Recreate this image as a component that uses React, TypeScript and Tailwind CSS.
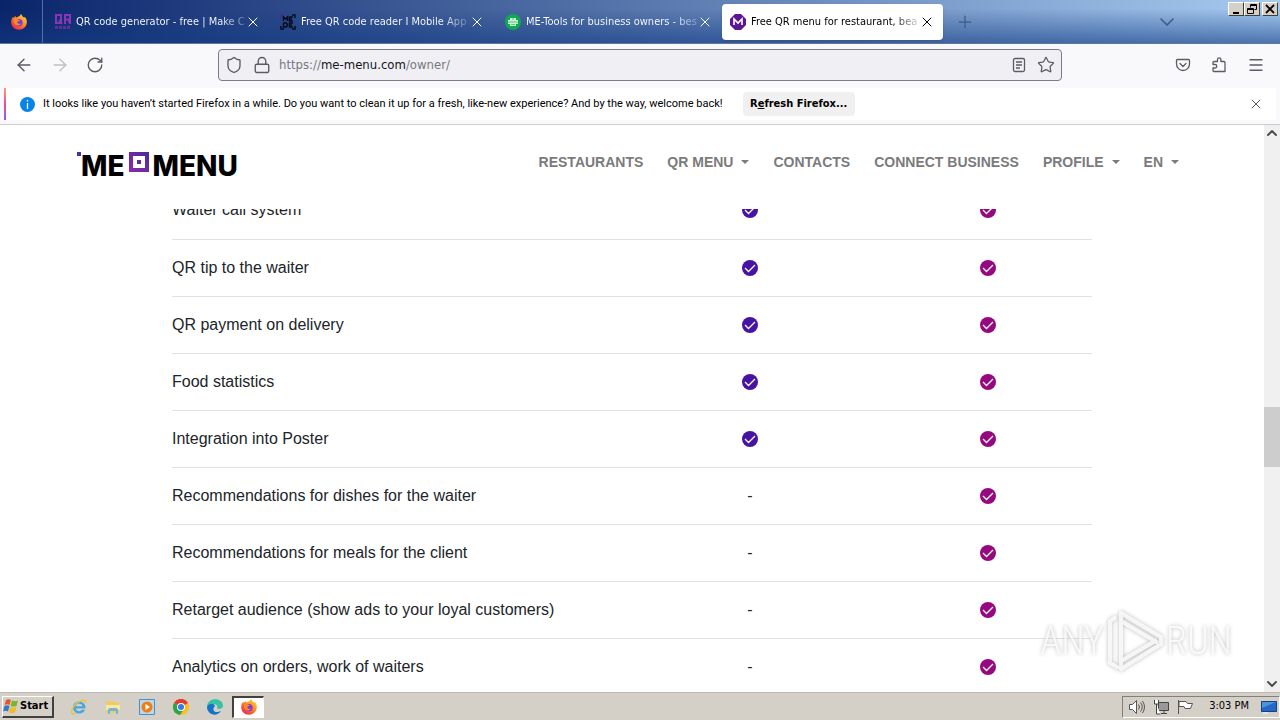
import { ReactNode, FC } from 'react'
import {
  ArrowLeft,
  ArrowRight,
  ChevronDown,
  ChevronUp,
  Lock,
  Menu,
  Plus,
  RotateCw,
  Shield,
  Star,
  X,
} from 'lucide-react'

interface TabProps {
  title: string
  icon: ReactNode
  active?: boolean
}

interface Feature {
  name: string
  basic: boolean
}

const features: Feature[] = [
  { name: 'Waiter call system', basic: true },
  { name: 'QR tip to the waiter', basic: true },
  { name: 'QR payment on delivery', basic: true },
  { name: 'Food statistics', basic: true },
  { name: 'Integration into Poster', basic: true },
  { name: 'Recommendations for dishes for the waiter', basic: false },
  { name: 'Recommendations for meals for the client', basic: false },
  { name: 'Retarget audience (show ads to your loyal customers)', basic: false },
  { name: 'Analytics on orders, work of waiters', basic: false },
]

const navLinks = [
  { label: 'RESTAURANTS', menu: false },
  { label: 'QR MENU', menu: true },
  { label: 'CONTACTS', menu: false },
  { label: 'CONNECT BUSINESS', menu: false },
  { label: 'PROFILE', menu: true },
  { label: 'EN', menu: true },
]

const FirefoxIcon: FC = () => (
  <svg className="size-4" viewBox="0 0 16 16" aria-hidden="true">
    <defs>
      <linearGradient id="fox" x1="1" y1="0" x2="0.2" y2="1">
        <stop offset="0" stopColor="#ffe14a" />
        <stop offset="0.45" stopColor="#ff9420" />
        <stop offset="1" stopColor="#ee1f55" />
      </linearGradient>
    </defs>
    <path
      d="M10 0c1 1 1 2 2.300 3.200 1 .3 1.700 0 2 .3C15.500 5 16 6.700 15.800 8.700 15.400 12.700 12.200 15.700 8 15.700c-4.500 0-7.800-3.500-7.800-7.500C.2 6 .9 4.200 2 2.700l.9 1.200L4.200 2l1 1.500C7 2.500 9 2.500 10 0z"
      fill="url(#fox)"
    />
    <circle cx="8" cy="8.700" r="3.600" fill="#7a3be0" />
    <path d="M3 5c2-.5 3 .2 4.500.7L9 6c-.5 1.300-2.300 1-2.700 2.100-.3 1.400 1.700 2.400 3.700 1.400-1 3-6.500 2.700-7-1.500z" fill="#ff8a1c" />
  </svg>
)

const QrGeneratorIcon: FC = () => (
  <svg className="size-4 shrink-0" viewBox="0 0 16 16" fill="none" stroke="#8a35b5" strokeWidth="2" aria-hidden="true">
    <path d="M1 1h5v8H1zM4 6l3 4M10 10V1h5v4.500h-5M12 5.500h2v2h1V10" />
    <path d="M0 13.500h16" strokeDasharray="3 1" strokeWidth="3" stroke="#5f2f9c" />
  </svg>
)

const QrReaderIcon: FC = () => (
  <svg className="size-4 shrink-0" viewBox="0 0 16 16" fill="none" stroke="#080b1c" strokeWidth="1.500" aria-hidden="true">
    <path d="M1 4V1h3" stroke="#4b2a9b" />
    <path d="M12 1h3v3M15 12v3h-3M4 15H1v-3" />
    <path d="M3.500 7V3l2 2 2-2v4M13 3H9.500v4H13M9.500 5H12M3.500 9v4h3l1-2-1-2zM13 9H9.500v4H13M9.500 11H12" />
  </svg>
)

const ToolsIcon: FC = () => (
  <svg className="size-4 shrink-0" viewBox="0 0 16 16" aria-hidden="true">
    <circle cx="8" cy="8" r="8" fill="#12a853" />
    <path d="M5 4h6v2h2v4h-2v2H5v-2H3V6h2z" fill="#c9f2d5" />
    <path d="M8 4v2M3 8h10M6 10.500h4" stroke="#57c883" />
  </svg>
)

const MenuSiteIcon: FC = () => (
  <svg className="size-4 shrink-0" viewBox="0 0 16 16" aria-hidden="true">
    <path d="M5 0h6l5 5v6l-5 5H5l-5-5V5z" fill="#5c1593" />
    <path d="M4 11V5l4 4 4-4v6" fill="none" stroke="#fff" strokeWidth="1.600" />
  </svg>
)

const Tab: FC<TabProps> = ({ title, icon, active }) => (
  <div
    className={
      active
        ? 'flex h-9 w-[221px] items-center rounded bg-white px-2 text-black shadow-sm'
        : 'flex h-9 w-[221px] items-center px-2 text-white'
    }
  >
    {icon}
    <button
      className={
        active
          ? 'ml-[5px] bg-linear-to-r from-black from-85% to-black/20 bg-clip-text pt-0.5 text-left whitespace-nowrap text-transparent'
          : 'ml-[5px] bg-linear-to-r from-white from-85% to-white/30 bg-clip-text pt-0.5 text-left whitespace-nowrap text-transparent'
      }
    >
      {title}
    </button>
    <button className="ml-auto" aria-label="Close tab">
      <X className="size-4" strokeWidth={1.5} />
    </button>
  </div>
)

const WindowButton: FC<{ label: string; children: ReactNode }> = ({ label, children }) => (
  <button
    aria-label={label}
    className="flex h-[14px] w-4 items-center justify-center border border-t-white border-r-[#404040] border-b-[#404040] border-l-white bg-[#d4d0c8]"
  >
    <svg className="h-3 w-3" viewBox="0 0 12 12" fill="none" stroke="#000">
      {children}
    </svg>
  </button>
)

const TitleBar: FC = () => (
  <header className="relative flex h-11 shrink-0 items-center border-b border-[#60789f] bg-[linear-gradient(to_bottom,transparent_20%,#123b8499),linear-gradient(to_right,#0a246a,#a6caf0)]">
    <button className="flex h-full w-[43px] items-center justify-center border-r border-[#536fa8] pr-1" aria-label="Firefox View">
      <FirefoxIcon />
    </button>
    <nav className="flex gap-1 pl-1">
      <Tab title="QR code generator - free | Make C" icon={<QrGeneratorIcon />} />
      <Tab title="Free QR code reader I Mobile App" icon={<QrReaderIcon />} />
      <Tab title="ME-Tools for business owners - bes" icon={<ToolsIcon />} />
      <Tab title="Free QR menu for restaurant, bea" icon={<MenuSiteIcon />} active />
    </nav>
    <button className="ml-3 text-[#405a85]" aria-label="New tab">
      <Plus className="size-5" strokeWidth={1.5} />
    </button>
    <button className="mr-[101px] ml-auto text-[#405a85]" aria-label="List all tabs">
      <ChevronDown className="size-6" strokeWidth={1.6} />
    </button>
    <div className="absolute top-0.5 right-0.5 flex">
      <WindowButton label="Minimize">
        <path d="M3 10h6" strokeWidth="2" />
      </WindowButton>
      <WindowButton label="Restore">
        <path d="M4.500 4.500V1.500h6v5h-2M1.500 5.500h6v5h-6zM4.500 2.500h6M1.500 6.500h6" />
      </WindowButton>
      <div className="w-0.5" />
      <WindowButton label="Close">
        <path d="M2 2l8 8M10 2L2 10" strokeWidth="1.800" />
      </WindowButton>
    </div>
  </header>
)

const Toolbar: FC = () => (
  <div className="flex h-[42px] shrink-0 items-center bg-[#f9f9fb] text-[#5b5b66]">
    <div className="flex w-[218px] items-center gap-4 pl-[14px]">
      <button aria-label="Back">
        <ArrowLeft className="size-5" strokeWidth={1.7} />
      </button>
      <button aria-label="Forward" className="text-[#c0c0c8]" disabled>
        <ArrowRight className="size-5" strokeWidth={1.7} />
      </button>
      <button aria-label="Reload">
        <RotateCw className="size-[18px]" strokeWidth={1.8} />
      </button>
    </div>
    <div className="flex h-8 max-w-[844px] flex-1 items-center rounded border border-[#7c7c85] bg-[#f0f0f4] px-1.5">
      <Shield className="size-[18px]" strokeWidth={1.8} />
      <Lock className="ml-2.5 size-[18px]" strokeWidth={1.8} />
      <div className="ml-2 flex-1 text-[13px] text-[#77777f]">
        https://<span className="text-[#15141a]">me-menu.com</span>/owner/
      </div>
      <button aria-label="Reader view">
        <svg className="size-4" viewBox="0 0 16 16" fill="none" stroke="currentColor" strokeWidth="1.300">
          <rect x="2.500" y="1.500" width="11" height="13" rx="1.500" />
          <path d="M5 5h6M5 8h6M5 11h4" />
        </svg>
      </button>
      <button className="ml-2.5" aria-label="Bookmark">
        <Star className="size-[18px]" strokeWidth={1.7} />
      </button>
    </div>
    <div className="ml-auto flex items-center gap-5 pr-[15px]">
      <button aria-label="Pocket">
        <svg className="size-4" viewBox="0 0 16 16" fill="none" stroke="currentColor" strokeWidth="1.300" strokeLinecap="round" strokeLinejoin="round">
          <path d="M2.500 2.500h11a1 1 0 0 1 1 1V7a6.500 6.500 0 0 1-13 0V3.500a1 1 0 0 1 1-1z" />
          <path d="M5 6.500l3 3 3-3" />
        </svg>
      </button>
      <button aria-label="Extensions">
        <svg className="size-4" viewBox="0 0 16 16" fill="none" stroke="currentColor" strokeWidth="1.300" strokeLinejoin="round">
          <path d="M2 7.500V5.500a1 1 0 0 1 1-1h3.500V2.500a1.700 1.700 0 0 1 3.400 0v2h3.100a1 1 0 0 1 1 1v9H3a1 1 0 0 1-1-1v-2.500h2a1.700 1.700 0 0 0 0-3.500z" />
        </svg>
      </button>
      <button aria-label="Application menu">
        <Menu className="size-[18px]" strokeWidth={1.8} />
      </button>
    </div>
  </div>
)

const Notification: FC = () => (
  <div className="shrink-0 border-b border-[#cccccf] bg-[#f9f9fb] px-1 pt-0.5 pb-1">
    <div className="flex h-8 items-center bg-white">
      <div className="h-full w-0.5 bg-linear-to-b from-[#ff9a6e] via-[#e84a9c] to-[#9059d8]" />
      <svg className="ml-[14px] size-[15px]" viewBox="0 0 15 15" aria-hidden="true">
        <circle cx="7.500" cy="7.500" r="7.500" fill="#0a84e4" />
        <path d="M7.500 3v1.500M7.500 6v6" stroke="#fff" strokeWidth="1.300" />
      </svg>
      <p className="ml-2 font-[Roboto] text-black">
        It looks like you haven’t started Firefox in a while. Do you want to clean it up for a fresh, like-new
        experience? And by the way, welcome back!
      </p>
      <button className="ml-5 h-6 w-28 rounded bg-[#f0f0f1] font-bold text-black">
        R<u>e</u>fresh Firefox...
      </button>
      <button className="mr-3 ml-auto text-[#5b5b66]" aria-label="Dismiss">
        <X className="size-4" strokeWidth={1.5} />
      </button>
    </div>
  </div>
)

const Logo: FC = () => (
  <a href="/" aria-label="ME MENU" className="flex items-start pt-2 font-[Inter] text-[28px] leading-8 font-extrabold text-black">
    <span className="mt-0.5 size-1 bg-[#4a2fa0]" />
    ME
    <svg className="mx-1 mt-0.5 size-5" viewBox="0 0 20 20">
      <defs>
        <linearGradient id="logo" x1="0" y1="1" x2="1" y2="0">
          <stop offset="0" stopColor="#8f2aa8" />
          <stop offset="1" stopColor="#4a2a9e" />
        </linearGradient>
      </defs>
      <path d="M0 0h20v20H0zM4 4v12h12V4z" fill="url(#logo)" fillRule="evenodd" />
      <path d="M8 8h4v4H8z" fill="#5a2ca0" />
    </svg>
    MENU
  </a>
)

const SiteHeader: FC = () => (
  <div className="flex h-[84px] shrink-0 items-center justify-between bg-white pr-[85px] pb-2.5 pl-[77px]">
    <Logo />
    <nav className="flex gap-6 font-['Liberation_Sans'] text-sm font-bold text-[#7b7b7b]">
      {navLinks.map(({ label, menu }) => (
        <a key={label} href="#" className="flex items-center gap-2">
          {label}
          {menu && <span className="border-x-4 border-t-4 border-x-transparent" />}
        </a>
      ))}
    </nav>
  </div>
)

const Check: FC<{ color: string }> = ({ color }) => (
  <svg className="mx-auto size-4" viewBox="0 0 16 16" role="img" aria-label="Included">
    <circle cx="8" cy="8" r="8" fill={color} />
    <path d="M3 8l3.500 3.500L13 5" fill="none" stroke="#fff" strokeWidth="1.300" />
  </svg>
)

const FeatureTable: FC = () => (
  <div className="min-h-0 flex-1 overflow-hidden">
    <table className="mx-auto -mt-[27px] w-[920px] max-w-full table-fixed font-['Liberation_Sans'] text-base text-[#212529]">
      <colgroup>
        <col />
        <col className="w-[268px]" />
        <col className="w-[208px]" />
      </colgroup>
      <tbody>
        {features.map(({ name, basic }) => (
          <tr key={name} className="h-[57px] border-b border-[#dee2e6]">
            <td>{name}</td>
            <td className="text-center">{basic ? <Check color="#4713a3" /> : '-'}</td>
            <td>
              <Check color="#96087f" />
            </td>
          </tr>
        ))}
      </tbody>
    </table>
  </div>
)

const Scrollbar: FC = () => (
  <div className="flex w-4 shrink-0 flex-col items-center bg-[#f0f0f0] text-[#505050]">
    <ChevronUp className="size-4" strokeWidth={3} />
    <div className="flex-[266]" />
    <div className="h-[60px] w-full bg-[#cdcdcd]" />
    <div className="flex-[209]" />
    <ChevronDown className="size-4" strokeWidth={3} />
  </div>
)

const Watermark: FC = () => (
  <div className="absolute right-8 bottom-4 flex items-center gap-0.5 font-['Roboto_Condensed',Roboto,sans-serif] text-[38px] leading-[70px] font-light text-white/80 [filter:drop-shadow(0_0_2px_#aaa)]">
    ANY
    <svg className="h-16 w-[58px]" viewBox="0 0 58 64" fill="none" stroke="currentColor" strokeWidth="4" strokeLinejoin="round" aria-hidden="true">
      <path d="M10 8L4 12v42l9 5M15 52V4l40 24v7L15 60v-8l36-21M15 12l37 22" />
    </svg>
    RUN
  </div>
)

const TaskButton: FC<{ label: string; children: ReactNode }> = ({ label, children }) => (
  <button aria-label={label} className="flex w-[34px] items-center justify-center">
    <svg className="size-4" viewBox="0 0 16 16">
      {children}
    </svg>
  </button>
)

const Taskbar: FC = () => (
  <footer className="flex h-7 shrink-0 items-center border-t border-[#bdbab3] bg-[#d4d0c8] pl-0.5 text-black">
    <button className="flex h-[22px] w-[52px] items-center gap-px border-t border-r-2 border-b-2 border-l border-t-white border-r-[#404040] border-b-[#404040] border-l-white font-bold">
      <svg className="size-4 shrink-0" viewBox="0 0 16 16" aria-hidden="true">
        <path d="M3 2q2-1.500 5 0L6.500 7q-2.500-1.500-5 0z" fill="#e8562a" />
        <path d="M9 2.500q3 1.500 6 0L13.500 8q-3 1-6 0z" fill="#76b82a" />
        <path d="M1.500 8q2.500-1.500 5 0L5 13.500q-2.500-1.500-5 0z" fill="#3478c8" />
        <path d="M7.500 9q3 1.500 6 0L12 14.500q-3 1-6 0z" fill="#f5bb22" />
      </svg>
      Start
    </button>
    <div className="ml-2 flex items-center">
      <TaskButton label="Internet Explorer">
        <path d="M14.500 9.500H5c.3 3 4.500 3.500 5.800 1.300h3.300C11.500 17 2 15 2 8.500 2 .5 15 .5 14.500 9.500zM5 7.200h6.400c-.5-3.200-5.800-3.200-6.400 0z" fill="#47a8e0" />
        <path d="M15 4.500C16-1 8 1 3.500 6.500-1 12 0 17 5 14" fill="none" stroke="#ecc13d" strokeWidth="1.300" />
      </TaskButton>
      <TaskButton label="Explorer">
        <path d="M1 2h6l1 1h6v11H1z" fill="#f0ca65" />
        <path d="M1 6h14v5H1z" fill="#fae8a2" />
        <path d="M3 15v-4q0-2 2-2h6q2 0 2 2v4h-2v-3H5v3z" fill="#72b6dc" />
      </TaskButton>
      <TaskButton label="Media Player">
        <path d="M.5.500h15v15H.5z" fill="#b9d7ef" stroke="#4b8fc4" />
        <circle cx="8" cy="8" r="5.500" fill="#ef7d15" />
        <path d="M6.500 5v6l4.500-3z" fill="#fff" />
      </TaskButton>
      <TaskButton label="Chrome">
        <circle cx="8" cy="8" r="8" fill="#fbc116" />
        <path d="M8 8L1 4a8 8 0 0 1 14 0z" fill="#e33b2e" />
        <path d="M8 8L1 4a8 8 0 0 0 6 12l4-6z" fill="#2da44e" />
        <circle cx="8" cy="8" r="4" fill="#fff" />
        <circle cx="8" cy="8" r="3" fill="#3b78e7" />
      </TaskButton>
      <TaskButton label="Edge">
        <path d="M0 8C0-2 16-2 16 7c0 3-5 4-6 2 2-4-5-6-10-1z" fill="#35c3a5" />
        <path d="M0 8c2-4 7-4 8-1-4 4 0 8 6 5-5 7-14 3-14-4z" fill="#1473c8" />
      </TaskButton>
      <button
        aria-label="Firefox"
        className="flex h-[22px] w-8 items-center justify-center border-t-2 border-r border-b border-l-2 border-t-[#404040] border-r-white border-b-white border-l-[#404040] bg-white"
      >
        <FirefoxIcon />
      </button>
    </div>
    <div className="ml-auto flex h-[22px] items-center border border-t-[#808080] border-r-white border-b-white border-l-[#808080] pr-0.5 pl-1.5">
      <svg className="size-4" viewBox="0 0 16 16" fill="none" stroke="#555" aria-hidden="true">
        <path d="M.5 5.500h3l4-4v13l-4-4h-3z" fill="#fff" />
        <path d="M9.500 5.500q2 2.500 0 5M11.500 3.500q3.500 4.500 0 9M13.500 2q4 6 0 12" />
      </svg>
      <svg className="ml-2 size-4" viewBox="0 0 16 16" fill="#fff" stroke="#444" aria-hidden="true">
        <path d="M5.500 3.500h10v8h-10z" fill="#999" />
        <path d="M8 14.500h6M11 12v2M1.500 1v4h4V1M3.500 5v10h4" />
      </svg>
      <svg className="ml-2 size-4" viewBox="0 0 16 16" fill="#fff" stroke="#555" aria-hidden="true">
        <path d="M1.500 15V1M2 2.500h7l1.500 2h5l-2 5H8l-1-2H2z" />
      </svg>
      <time className="ml-4">3:03 PM</time>
      <svg className="ml-3 size-4" viewBox="0 0 16 16" aria-hidden="true">
        <path d="M.5 2.500h15v10H.5z" fill="#2267c9" stroke="#17407d" />
        <path d="M1 3h14L1 9z" fill="#4f93e0" />
        <path d="M2 13h5v2H2z" fill="#dce8f5" />
      </svg>
    </div>
  </footer>
)

export default function App() {
  return (
    <div className="relative flex h-screen flex-col overflow-hidden bg-white font-['DejaVu_Sans_Condensed','Noto_Sans',sans-serif] text-[11px]">
      <TitleBar />
      <Toolbar />
      <Notification />
      <div className="flex min-h-0 flex-1">
        <main className="relative flex min-w-0 flex-1 flex-col">
          <SiteHeader />
          <FeatureTable />
          <Watermark />
        </main>
        <Scrollbar />
      </div>
      <Taskbar />
    </div>
  )
}
